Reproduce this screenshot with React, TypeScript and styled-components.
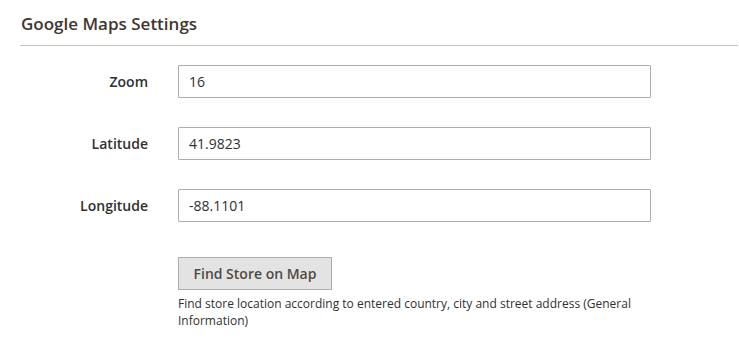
import React from "react";
import styled, { createGlobalStyle } from "styled-components";

const GlobalStyle = createGlobalStyle`
  html, body {
    margin: 0;
    padding: 0;
    background: #fff;
  }
  body {
    font-family: "Open Sans", "Liberation Sans", sans-serif;
    color: #303030;
  }
`;

const FIELDS = [
  { id: "zoom", label: "Zoom", value: "16" },
  { id: "latitude", label: "Latitude", value: "41.9823" },
  { id: "longitude", label: "Longitude", value: "-88.1101" },
];

const App = () => {
  return (
    <>
      <GlobalStyle />
      <Section>
        <SectionTitle>Google Maps Settings</SectionTitle>

        <Fieldset>
          {FIELDS.map((field) => (
            <FieldRow key={field.id}>
              <Label htmlFor={field.id}>{field.label}</Label>
              <Input id={field.id} defaultValue={field.value} />
            </FieldRow>
          ))}

          <ActionRow>
            <span />
            <ActionBox>
              <Button type="button">Find Store on Map</Button>
              <Note>
                Find store location according to entered country, city and
                street address (General Information)
              </Note>
            </ActionBox>
          </ActionRow>
        </Fieldset>
      </Section>
    </>
  );
};

export default App;

const Section = styled.div`
  padding-left: 20px;
  padding-right: 1px;
`;

const SectionTitle = styled.h2`
  margin: 0;
  padding: 13px 0 11px 1px;
  border-bottom: 1px solid #cac3b4;
  color: #41362f;
  font-size: 17px;
  font-weight: 600;
  line-height: 21px;
`;

const Fieldset = styled.div`
  display: flex;
  flex-direction: column;
  gap: 29px;
  padding-top: 19px;
`;

const FieldRow = styled.div`
  display: grid;
  grid-template-columns: 128px 473px;
  column-gap: 30px;
  align-items: center;
`;

const ActionRow = styled(FieldRow)`
  align-items: start;
  margin-top: 6px;
`;

const Label = styled.label`
  text-align: right;
  color: #303030;
  font-size: 14px;
  font-weight: 600;
  line-height: 20px;
`;

const Input = styled.input`
  box-sizing: border-box;
  width: 473px;
  height: 33px;
  margin: 0;
  padding: 0 10px;
  border: 1px solid #adadad;
  border-radius: 1px;
  background: #fff;
  color: #303030;
  font-family: "Open Sans", "Liberation Sans", sans-serif;
  font-size: 14px;
  outline: none;
`;

const ActionBox = styled.div`
  display: flex;
  flex-direction: column;
  align-items: flex-start;
`;

const Button = styled.button`
  box-sizing: border-box;
  width: 154px;
  height: 33px;
  margin: 0;
  padding: 0 14px;
  border: 1px solid #adadad;
  border-radius: 0;
  background: #e3e3e3;
  color: #514943;
  font-family: "Open Sans", "Liberation Sans", sans-serif;
  font-size: 14px;
  font-weight: 600;
  cursor: pointer;
`;

const Note = styled.p`
  margin: 5px 0 0;
  color: #303030;
  font-size: 12px;
  line-height: 17px;
`;
